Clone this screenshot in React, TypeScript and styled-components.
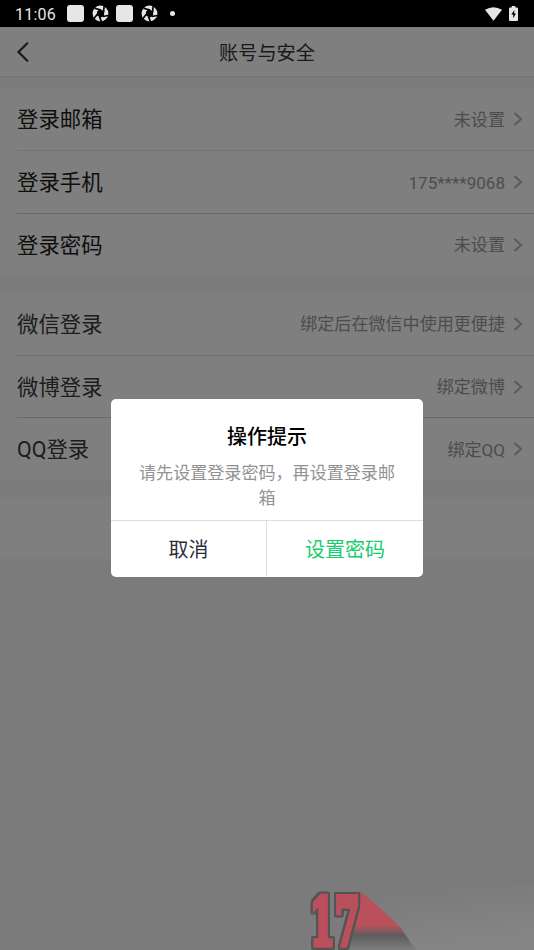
import React from 'react';
import styled, { createGlobalStyle } from 'styled-components';

const GlobalStyle = createGlobalStyle`
  * { box-sizing: border-box; }
  body {
    margin: 0;
    overflow: hidden;
    font-family: Roboto, "Noto Sans CJK SC", sans-serif;
  }
`;

const Screen = styled.div`
  position: relative;
  width: 534px;
  height: 950px;
  overflow: hidden;
  display: flex;
  flex-direction: column;
  background: #f7f7f7;
`;

const StatusBar = styled.div`
  height: 27px;
  flex: none;
  display: flex;
  align-items: center;
  justify-content: space-between;
  padding: 0 16px 0 15px;
  background: #000;
  color: #e6e6e6;
`;

const StatusGroup = styled.div`
  display: flex;
  align-items: center;
  gap: 7.5px;
`;

const Clock = styled.span`
  width: 41px;
  margin-right: 3.5px;
  padding-top: 1px;
  font-size: 16px;
  font-weight: 400;
  line-height: 27px;
  white-space: nowrap;
  letter-spacing: 0.25px;
`;

const Notice = styled.span`
  width: 17px;
  height: 17px;
  border-radius: 3px;
  background: #e6e6e6;
`;

const Dot = styled.span`
  width: 5px;
  height: 5px;
  margin-left: 5px;
  border-radius: 50%;
  background: #e6e6e6;
`;

const Header = styled.header`
  height: 50px;
  flex: none;
  display: grid;
  grid-template-columns: 46px 1fr 46px;
  align-items: center;
  background: #fff;
  border-bottom: 1px solid #ebebeb;
`;

const BackIcon = styled.svg`
  width: 14px;
  height: 22px;
  margin-left: 16px;
`;

const Title = styled.h1`
  margin: 0;
  padding-top: 4px;
  font-size: 19.2px;
  font-weight: 400;
  line-height: 28px;
  text-align: center;
  color: #333;
`;

const Content = styled.main`
  display: flex;
  flex-direction: column;
  gap: 17px;
  padding-top: 11px;
`;

const Group = styled.section`
  display: flex;
  flex-direction: column;
  min-height: 62px;
  background: #fff;
`;

const Row = styled.div<{ $height: number; $line?: string }>`
  height: ${p => p.$height}px;
  margin-left: 17px;
  padding-right: 11px;
  display: flex;
  align-items: center;
  border-bottom: ${p => (p.$line ? `1px solid ${p.$line}` : '0')};
`;

const Label = styled.span<{ $strong?: boolean }>`
  flex: 1;
  padding-top: 2px;
  font-size: 21.4px;
  line-height: 30px;
  color: ${p => (p.$strong ? '#1c1c1c' : '#3a3a3a')};
`;

const Value = styled.span`
  margin-right: 8px;
  padding-top: 1px;
  font-size: 17.07px;
  line-height: 26px;
  color: #999;
`;

const ArrowIcon = styled.svg`
  width: 10px;
  height: 16px;
`;

const Mask = styled.div`
  position: absolute;
  inset: 27px 0 0;
  background: rgba(0, 0, 0, 0.5);
`;

const Badge = styled.svg`
  position: absolute;
  left: 300px;
  bottom: 0;
  width: 234px;
  height: 66px;
`;

const Numerals = styled.text`
  font: 700 66px "DejaVu Serif", serif;
  fill: #b9505b;
  stroke: #b9505b;
  stroke-width: 4.5px;
  vector-effect: non-scaling-stroke;
`;

const Outlined = styled.g`
  filter: drop-shadow(2px 0 0 #545454) drop-shadow(-2px 0 0 #545454) drop-shadow(0 2px 0 #545454)
    drop-shadow(0 -2px 0 #545454);
`;

const Dialog = styled.div`
  position: absolute;
  left: 111px;
  top: 399px;
  width: 312px;
  height: 178px;
  display: flex;
  flex-direction: column;
  border-radius: 5px;
  background: #fff;
  text-align: center;
`;

const DialogBody = styled.div`
  flex: 1;
  padding: 24px 26px 0;
`;

const DialogTitle = styled.h2`
  margin: 0 0 9px;
  font-size: 20px;
  font-weight: 500;
  line-height: 29px;
  color: #000;
`;

const Message = styled.p`
  margin: 0;
  font-size: 17.07px;
  line-height: 25px;
  color: #929292;
`;

const Actions = styled.div`
  height: 57px;
  display: grid;
  grid-template-columns: 1fr 1fr;
  border-top: 1px solid #dedede;
`;

const Action = styled.button<{ $primary?: boolean }>`
  padding: 0 0 1px;
  border: 0;
  border-right: ${p => (p.$primary ? '0' : '1px solid #dedede')};
  background: transparent;
  font: 400 20px Roboto, "Noto Sans CJK SC", sans-serif;
  color: ${p => (p.$primary ? '#16ce6c' : '#2b2e38')};
`;

function Aperture() {
  return (
    <svg width="17" height="17" viewBox="0 0 17 17">
      <circle cx="8.5" cy="8.5" r="7.9" fill="#e6e6e6" />
      <path d="M7.800 4.300 12.300 6.200 11.900 10.800 8.600 12.800 4.800 10.200 5.200 6.300Z" fill="#000" />
      <path
        d="M9 5.100 2.700 3.200M11.500 7 12.200 1M10.500 11.500 16.700 10.500M7.500 11.800 9.500 17M5.500 9 2 13.500"
        stroke="#000"
        strokeWidth="1.700"
      />
    </svg>
  );
}

function Arrow() {
  return (
    <ArrowIcon viewBox="0 0 10 16" fill="none">
      <path d="M1.500 2 8 8 1.500 14" stroke="#b6b6b6" strokeWidth="2.200" />
    </ArrowIcon>
  );
}

interface Entry {
  label: string;
  value: string;
  height: number;
  line?: string;
}

const accountRows: Entry[] = [
  { label: '登录邮箱', value: '未设置', height: 63, line: '#e6e6e6' },
  { label: '登录手机', value: '175****9068', height: 63, line: '#cfcfcf' },
  { label: '登录密码', value: '未设置', height: 61 },
];

const socialRows: Entry[] = [
  { label: '微信登录', value: '绑定后在微信中使用更便捷', height: 64, line: '#dedede' },
  { label: '微博登录', value: '绑定微博', height: 62, line: '#cfcfcf' },
  { label: 'QQ登录', value: '绑定QQ', height: 62 },
];

function Settings({ rows, strong }: { rows: Entry[]; strong?: boolean }) {
  return (
    <Group>
      {rows.map(row => (
        <Row key={row.label} $height={row.height} $line={row.line}>
          <Label $strong={strong}>{row.label}</Label>
          <Value>{row.value}</Value>
          <Arrow />
        </Row>
      ))}
    </Group>
  );
}

export default function App() {
  return (
    <>
      <GlobalStyle />
      <Screen>
        <StatusBar>
          <StatusGroup>
            <Clock>11:06</Clock>
            <Notice />
            <Aperture />
            <Notice />
            <Aperture />
            <Dot />
          </StatusGroup>
          <StatusGroup>
            <svg width="17" height="14" viewBox="0 0 17 14">
              <path d="M0 2.800Q8.500-2.500 17 2.800L8.500 13.800Z" fill="#e6e6e6" />
            </svg>
            <svg width="9" height="15" viewBox="0 0 9 15">
              <path d="M2.700 0h3.600v1.500H8q1 0 1 1V14q0 1-1 1H1q-1 0-1-1V2.500q0-1 1-1h1.700Z" fill="#e6e6e6" />
              <path d="M5.400 4 2.300 8.500h1.900v3.700l2.700-4.700H5.200Z" fill="#000" />
            </svg>
          </StatusGroup>
        </StatusBar>
        <Header>
          <BackIcon viewBox="0 0 14 22" fill="none">
            <path d="M11.300 2.300 2.500 11 11.300 19.700" stroke="#333" strokeWidth="2.200" strokeLinecap="round" />
          </BackIcon>
          <Title>账号与安全</Title>
        </Header>
        <Content>
          <Settings rows={accountRows} strong />
          <Settings rows={socialRows} />
          <Group />
        </Content>
        <Mask />
        <Badge viewBox="0 0 234 66">
          <defs>
            <linearGradient id="glow" x1="0" y1="0" x2="0.350" y2="1">
              <stop offset="0.200" stopColor="#868686" stopOpacity="0" />
              <stop offset="1" stopColor="#868686" stopOpacity="0.900" />
            </linearGradient>
            <linearGradient id="trail" gradientUnits="userSpaceOnUse" x1="62" y1="7" x2="62" y2="66">
              <stop offset="0.580" stopColor="#b9505b" />
              <stop offset="0.680" stopColor="#85585c" />
              <stop offset="0.750" stopColor="#5e5c5c" />
              <stop offset="1" stopColor="#7d7d7d" />
            </linearGradient>
          </defs>
          <path d="M50 0H234V66H50Z" fill="url(#glow)" />
          <path d="M55 8H61L80 24 100 43 116 66H50V30Z" fill="url(#trail)" />
          <Outlined>
            <Numerals transform="translate(10 60.500) scale(0.540 1)">17</Numerals>
          </Outlined>
        </Badge>
        <Dialog role="dialog">
          <DialogBody>
            <DialogTitle>操作提示</DialogTitle>
            <Message>请先设置登录密码，再设置登录邮箱</Message>
          </DialogBody>
          <Actions>
            <Action>取消</Action>
            <Action $primary>设置密码</Action>
          </Actions>
        </Dialog>
      </Screen>
    </>
  );
}
